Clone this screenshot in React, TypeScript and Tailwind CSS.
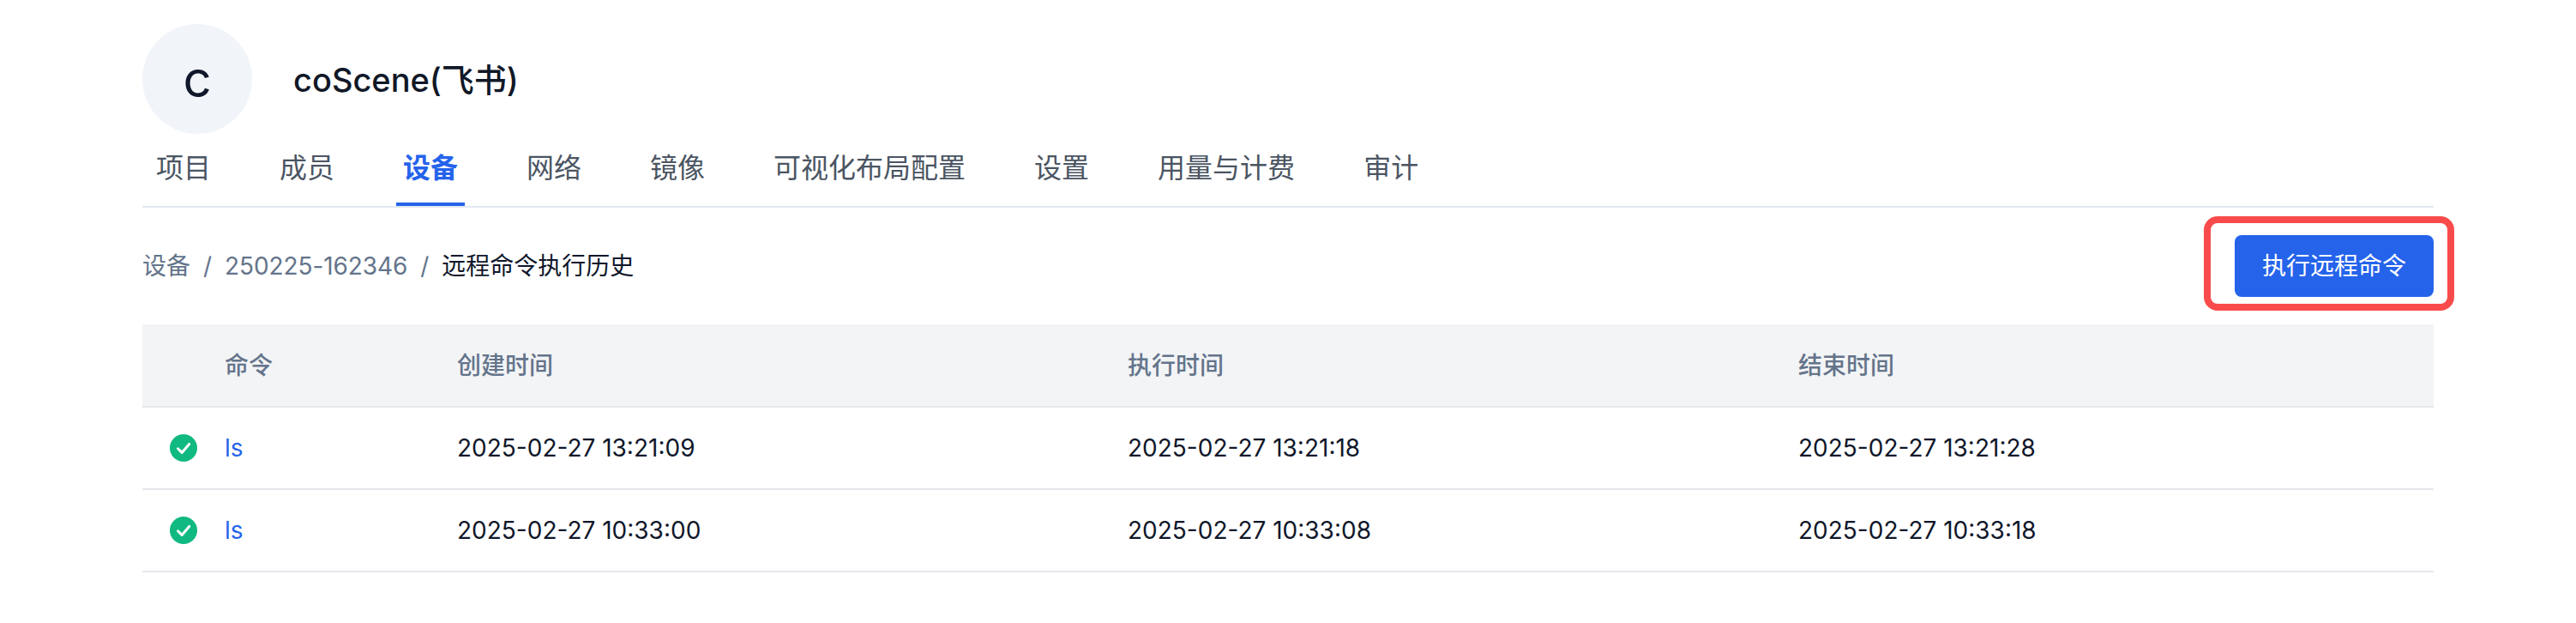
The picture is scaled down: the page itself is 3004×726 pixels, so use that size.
import { Fragment } from "react";

const tabs = ["项目", "成员", "设备", "网络", "镜像", "可视化布局配置", "设置", "用量与计费", "审计"];

const records = [
  { command: "ls", created: "2025-02-27 13:21:09", executed: "2025-02-27 13:21:18", finished: "2025-02-27 13:21:28" },
  { command: "ls", created: "2025-02-27 10:33:00", executed: "2025-02-27 10:33:08", finished: "2025-02-27 10:33:18" },
];

const gridCols = "grid grid-cols-[96px_271px_782px_782px_1fr] items-center";

function StatusIcon() {
  return (
    <svg width="32" height="32" viewBox="0 0 32 32" className="ml-[32px]">
      <circle cx="16" cy="16" r="16" fill="#10b981" />
      <path d="M9.5 16.8l4.6 4.6 8.6-10" fill="none" stroke="#fff" strokeWidth="3" strokeLinecap="round" strokeLinejoin="round" />
    </svg>
  );
}

export default function App() {
  return (
    <div className="w-[3004px] h-[726px] bg-white px-[166px] pt-[28px] font-['Inter','Noto_Sans_CJK_SC',sans-serif] text-[28px]">
      {/* Header */}
      <div className="flex items-center gap-[48px]">
        <div className="flex h-[128px] w-[128px] items-center justify-center rounded-full bg-[#f1f5f9] text-[58px] leading-none text-[#0f172a]">
          c
        </div>
        <h1 className="pt-[2px] text-[38px] font-medium leading-[40px] text-[#111827]">coScene(飞书)</h1>
      </div>

      {/* Tabs */}
      <div className="flex h-[86px] gap-[64px] border-b-2 border-[#e2e8f0] pl-[8px]">
        {tabs.map((tab) => (
          <div
            key={tab}
            className={
              tab === "设备"
                ? "flex h-[84px] items-center border-b-4 border-[#2563eb] px-[8px] text-[32px] font-semibold text-[#2563eb]"
                : "flex h-[84px] items-center border-b-4 border-transparent px-[8px] text-[32px] text-[#4b5563]"
            }
          >
            {tab}
          </div>
        ))}
      </div>

      {/* Breadcrumb + action */}
      <div className="flex h-[136px] items-center justify-between">
        <div className="flex items-center gap-[15px] text-[#64748b]">
          <span>设备</span>
          <span>/</span>
          <span className="tracking-[-0.1px]">250225-162346</span>
          <span>/</span>
          <span className="text-[#0f172a]">远程命令执行历史</span>
        </div>
        <div className="relative">
          <button className="h-[72px] w-[232px] rounded-[8px] bg-[#2563eb] text-[28px] text-white">
            执行远程命令
          </button>
          <div className="absolute -left-[36px] -right-[24px] -top-[22px] -bottom-[16px] rounded-[16px] border-[8px] border-[#f94b4b]" />
        </div>
      </div>

      {/* Table */}
      <div className={`${gridCols} h-[97px] border-b-2 border-[#e5e7eb] bg-[#f3f4f6] font-medium text-[#64748b]`}>
        <div />
        <div>命令</div>
        <div>创建时间</div>
        <div>执行时间</div>
        <div>结束时间</div>
      </div>
      {records.map((r) => (
        <Fragment key={r.created}>
          <div className={`${gridCols} h-[96px] border-b-2 border-[#e5e7eb] text-[#0f172a]`}>
            <StatusIcon />
            <div className="text-[#2563eb]">{r.command}</div>
            <div>{r.created}</div>
            <div>{r.executed}</div>
            <div>{r.finished}</div>
          </div>
        </Fragment>
      ))}
    </div>
  );
}
